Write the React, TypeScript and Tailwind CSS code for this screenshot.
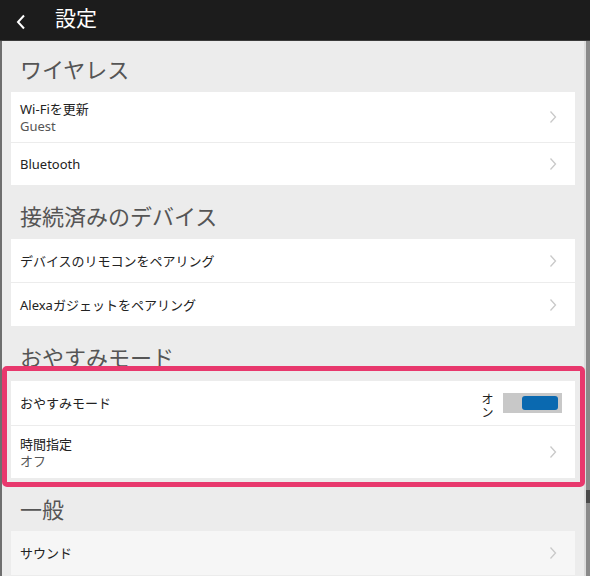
import type { ReactNode } from 'react';

const FONT = "font-['Noto_Sans','Noto_Sans_CJK_JP',sans-serif]";

function Chevron() {
  return (
    <svg width="8" height="14" viewBox="0 0 8 14" className="shrink-0">
      <polyline points="1.5,1.5 6.5,7 1.5,12.5" fill="none" stroke="#c9c9c9" strokeWidth="1.3" />
    </svg>
  );
}

function Heading({ children, pt, pb }: { children: ReactNode; pt: string; pb: string }) {
  return <div className={'px-[9px] text-[22px] leading-[26px] text-[#555] ' + pt + ' ' + pb}>{children}</div>;
}

function Row({
  title,
  sub,
  h,
  right,
  divider,
}: {
  title: string;
  sub?: string;
  h: string;
  right?: ReactNode;
  divider?: boolean;
}) {
  return (
    <div
      className={
        'flex items-center pl-[9px] pr-[18px] ' + h + (divider ? ' border-t border-[#ececec]' : '')
      }
    >
      <div className="flex-1 min-w-0">
        <div className="text-[13px] leading-[18px] text-[#222]">{title}</div>
        {sub && <div className="text-[13px] leading-[17px] text-[#555]">{sub}</div>}
      </div>
      {right ?? <Chevron />}
    </div>
  );
}

function Toggle() {
  return (
    <div className="flex items-center gap-[9px] -mr-[5px]">
      {/* label stacked one character per line */}
      <div className="w-[13px] text-[12px] leading-[13px] text-[#222] text-center mt-[6px]">オン</div>
      <div className="w-[59px] h-[20px] bg-[#c8c8c8] flex items-center justify-end pr-[4px]">
        <div className="w-[36px] h-[14px] rounded-[3px] bg-[#0a69b0]" />
      </div>
    </div>
  );
}

export default function App() {
  return (
    <div className={'relative w-[590px] h-[576px] overflow-hidden bg-[#ececec] flex flex-col ' + FONT}>
      {/* Top bar */}
      <div className="h-[41px] shrink-0 bg-[#1c1c1c] border-b border-[#3a3a3a] flex items-center">
        <svg width="10" height="16" viewBox="0 0 10 16" className="ml-[16px] mt-[4px]">
          <polyline points="8,1.5 2,8 8,14.5" fill="none" stroke="#fff" strokeWidth="2" />
        </svg>
        <span className="ml-[29px] -mt-[5px] text-[21px] leading-[26px] text-white">設定</span>
      </div>

      <div className="flex flex-1 min-h-0">
        <div className="w-[2px] bg-[#6e6e6e]" />

        <div className="flex-1 flex flex-col px-[9px] border-r-2 border-[#dcdcdc]">
          <Heading pt="pt-[15px]" pb="pb-[10px]">ワイヤレス</Heading>
          <div className="bg-white">
            <Row title="Wi-Fiを更新" sub="Guest" h="h-[50px]" />
            <Row title="Bluetooth" h="h-[43px]" divider />
          </div>

          <Heading pt="pt-[18px]" pb="pb-[10px]">接続済みのデバイス</Heading>
          <div className="bg-white">
            <Row title="デバイスのリモコンをペアリング" h="h-[43px]" />
            <Row title="Alexaガジェットをペアリング" h="h-[44px]" divider />
          </div>

          <Heading pt="pt-[18px]" pb="pb-[11px]">おやすみモード</Heading>
          <div className="bg-white">
            <Row title="おやすみモード" h="h-[44px]" right={<Toggle />} />
            <Row title="時間指定" sub="オフ" h="h-[53px]" divider />
          </div>

          <Heading pt="pt-[18px]" pb="pb-[9px]">一般</Heading>
          <div className="bg-[#f6f6f6]">
            <Row title="サウンド" h="h-[44px]" />
          </div>
        </div>

        {/* Scrollbar */}
        <div className="w-[4px] bg-[#8a8a8a] flex flex-col">
          <div className="h-[449px]" />
          <div className="h-[13px] bg-[#4a4a4a]" />
        </div>
      </div>

      {/* Highlight annotation */}
      <div className="absolute left-[2px] top-[366px] w-[583px] h-[121px] border-[5px] border-[#e8386d] rounded-[5px]" />
    </div>
  );
}
